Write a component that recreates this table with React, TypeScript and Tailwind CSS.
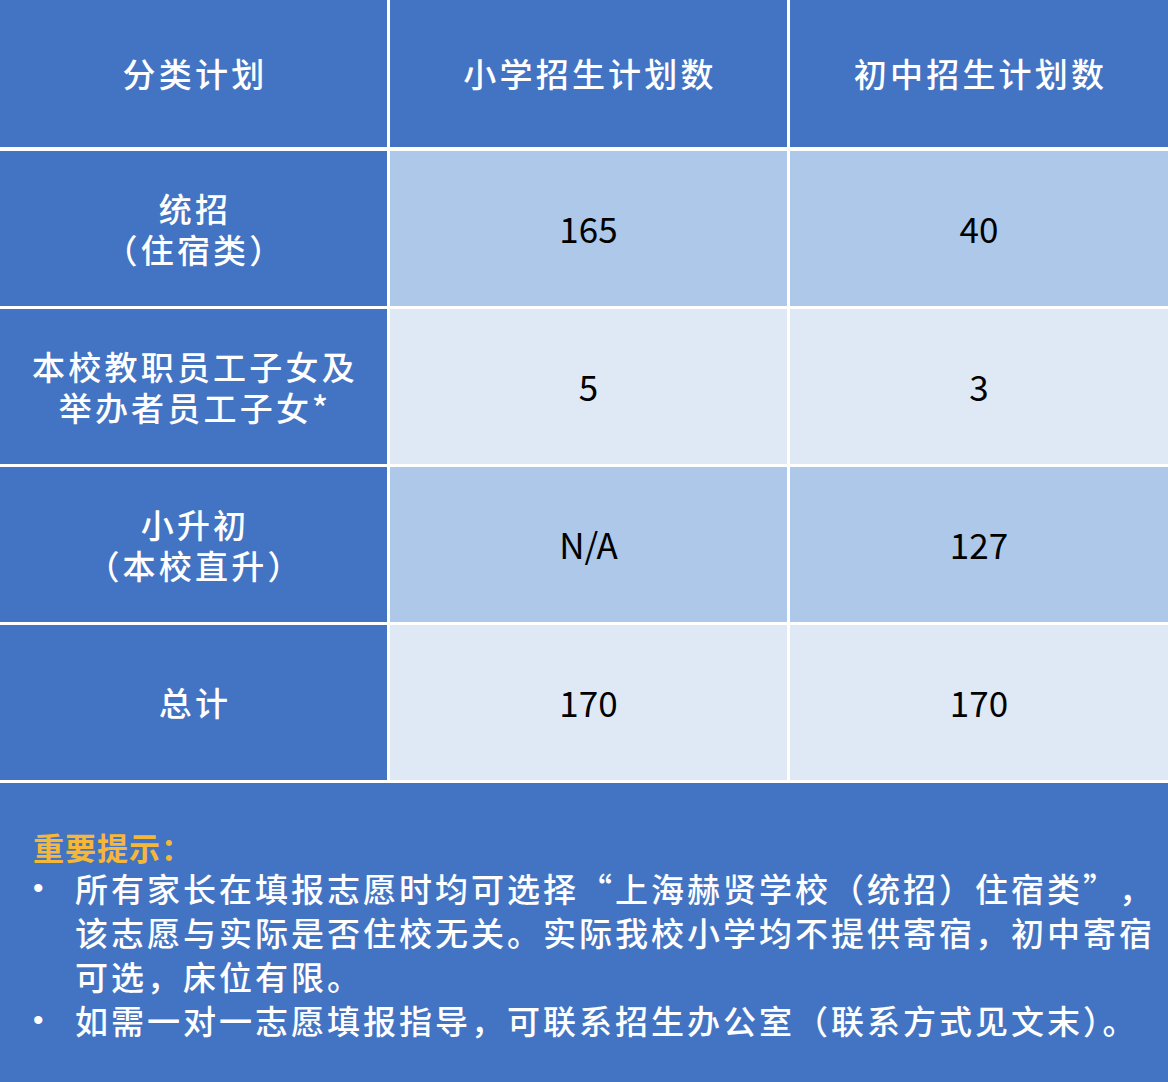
import React from "react";

const font = { fontFamily: '"Noto Sans CJK SC", "Noto Sans", sans-serif' };

type Row = { label: string[]; a: string; b: string; bg: string };

const rows: Row[] = [
  { label: ["统招", "（住宿类）"], a: "165", b: "40", bg: "bg-[#adc8e9]" },
  { label: ["本校教职员工子女及", "举办者员工子女*"], a: "5", b: "3", bg: "bg-[#dee9f5]" },
  { label: ["小升初", "（本校直升）"], a: "N/A", b: "127", bg: "bg-[#adc8e9]" },
  { label: ["总计"], a: "170", b: "170", bg: "bg-[#dee9f5]" },
];

export default function App() {
  return (
    <div className="w-[1168px] h-[1082px] bg-white flex flex-col overflow-hidden" style={font}>
      {/* header */}
      <div className="grid grid-cols-[387px_397px_378px] gap-x-[3px] h-[147px] shrink-0">
        {["分类计划", "小学招生计划数", "初中招生计划数"].map((t) => (
          <div
            key={t}
            className="bg-[#4374c3] text-white flex items-center justify-center text-[33px] font-medium tracking-[3.2px] pl-[3px]"
          >
            {t}
          </div>
        ))}
      </div>
      <div className="h-[4px] shrink-0" />
      <div className="flex flex-col gap-y-[3px] shrink-0">
        {rows.map((r, i) => (
          <div
            key={i}
            className="grid grid-cols-[387px_397px_378px] gap-x-[3px] h-[155px]"
          >
            <div className="bg-[#4374c3] text-white flex flex-col items-center justify-center text-[33px] font-medium tracking-[3.2px] pl-[3px] leading-[41px]">
              {r.label.map((l) => (
                <div key={l}>{l}</div>
              ))}
            </div>
            <div
              className={`${r.bg} text-black flex items-center justify-center text-[35px] font-normal`}
            >
              {r.a}
            </div>
            <div
              className={`${r.bg} text-black flex items-center justify-center text-[35px] font-normal`}
            >
              {r.b}
            </div>
          </div>
        ))}
      </div>
      <div className="h-[3px] shrink-0" />
      <div className="flex-1 bg-[#4374c3] pt-[46px] pl-[33px] text-white">
        <div className="text-[31px] font-bold text-[#f5b73a] leading-[36px] tracking-[1px] mb-[1px]">
          重要提示：
        </div>
        <div className="flex text-[33px] font-medium leading-[44px] tracking-[3px] whitespace-nowrap">
          <div className="w-[42px] shrink-0 text-[30px]" style={{ fontFamily: '"Liberation Sans", sans-serif' }}>•</div>
          <div>
            所有家长在填报志愿时均可选择
            <span className="inline-block w-[36px] text-right">“</span>
            上海赫贤学校（统招）住宿类
            <span className="inline-block w-[36px] text-left">”</span>
            ，
            <br />
            该志愿与实际是否住校无关。实际我校小学均不提供寄宿，初中寄宿
            <br />
            可选，床位有限。
          </div>
        </div>
        <div className="flex text-[33px] font-medium leading-[44px] tracking-[3px] whitespace-nowrap">
          <div className="w-[42px] shrink-0 text-[30px]" style={{ fontFamily: '"Liberation Sans", sans-serif' }}>•</div>
          <div>如需一对一志愿填报指导，可联系招生办公室（联系方式见文末）。</div>
        </div>
      </div>
    </div>
  );
}
